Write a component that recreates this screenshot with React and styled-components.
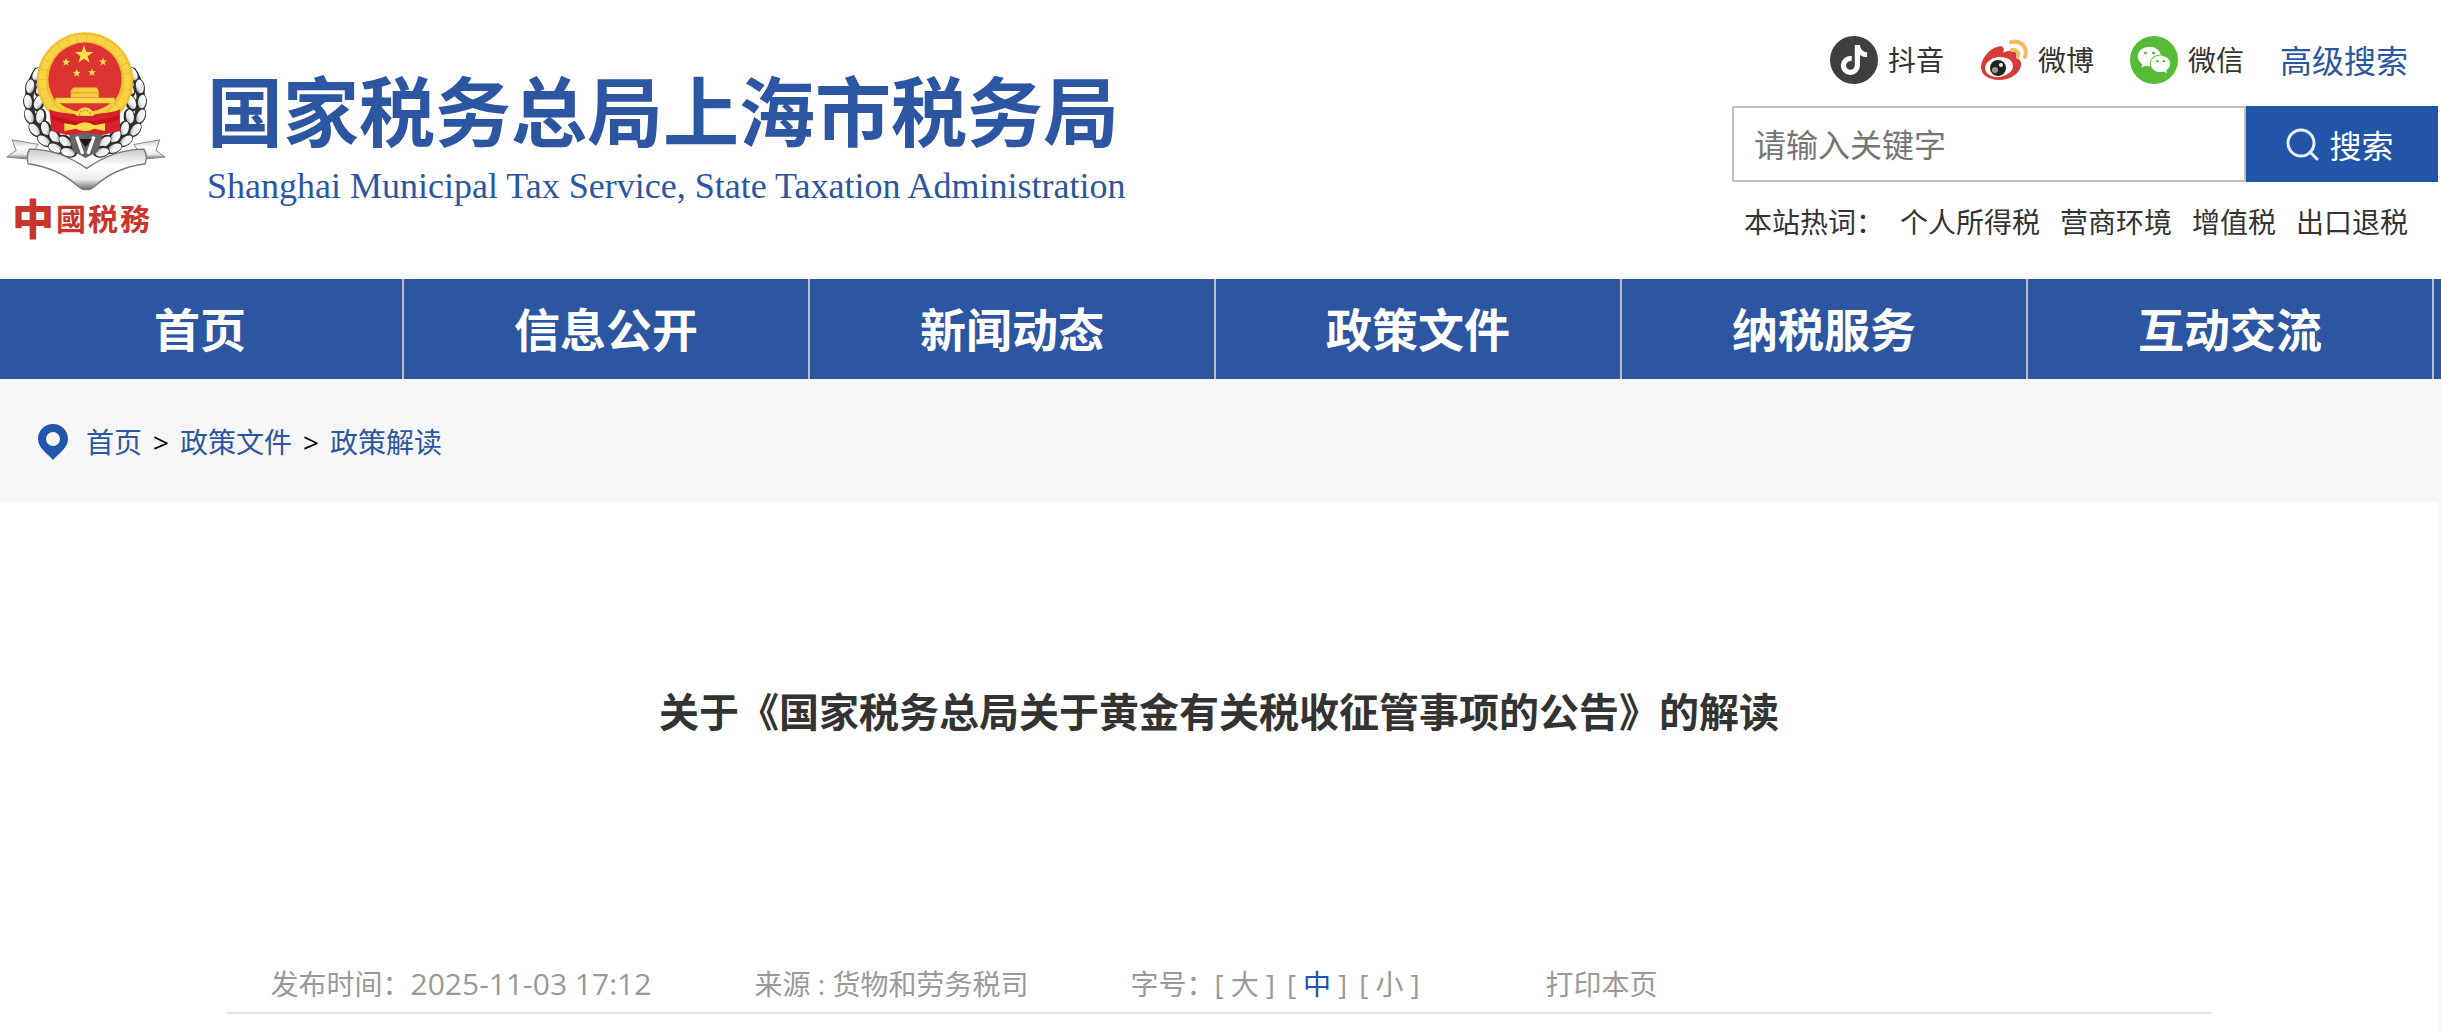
import { useState } from "react";
import styled, { createGlobalStyle } from "styled-components";
import { FaTiktok, FaWeixin } from "react-icons/fa";

const navItems = ["首页", "信息公开", "新闻动态", "政策文件", "纳税服务", "互动交流"];
const hotWords = ["个人所得税", "营商环境", "增值税", "出口退税"];
const fontSizes = ["大", "中", "小"];

// leaf positions on the left branch, the right one is mirrored
const leaves = [
  [112, 165, 28],
  [92, 202, 8],
  [124, 208, 38],
  [86, 247, -8],
  [116, 250, 20],
  [90, 290, -24],
  [122, 292, 6],
  [106, 330, -40],
  [138, 328, -14],
  [134, 362, -56],
  [166, 352, -34],
  [168, 384, -66],
  [198, 366, -50],
  [206, 396, -76],
];

function star(cx, cy, r) {
  const points = [];
  for (let i = 0; i < 10; i++) {
    const a = (Math.PI / 5) * i - Math.PI / 2;
    const d = i % 2 ? r * 0.4 : r;
    points.push(`${cx + d * Math.cos(a)},${cy + d * Math.sin(a)}`);
  }
  return points.join(" ");
}

function Branch() {
  return (
    <>
      <path d="M116 150C66 220 70 340 214 402" fill="none" stroke="#333" strokeWidth="26" />
      {leaves.map(([x, y, turn]) => (
        <g key={`${x}-${y}`} transform={`translate(${x} ${y}) rotate(${turn})`}>
          <ellipse rx="17" ry="26" fill="#2e2e2e" />
          <ellipse cx="-2" cy="-2" rx="12" ry="21" fill="url(#silver)" />
        </g>
      ))}
    </>
  );
}

function Emblem() {
  return (
    <EmblemSvg viewBox="0 0 540 520" aria-hidden="true">
      <defs>
        <linearGradient id="silver" x1="0" y1="0" x2="1" y2="1">
          <stop offset="0" stopColor="#fff" />
          <stop offset="0.6" stopColor="#eee" />
          <stop offset="1" stopColor="#8a8a8a" />
        </linearGradient>
        <linearGradient id="band" x1="0" y1="0" x2="0" y2="1">
          <stop offset="0" stopColor="#c8c8c8" />
          <stop offset="0.4" stopColor="#fff" />
          <stop offset="0.75" stopColor="#ececec" />
          <stop offset="1" stopColor="#666" />
        </linearGradient>
      </defs>
      <Branch />
      <g transform="translate(510 0) scale(-1 1)">
        <Branch />
      </g>
      <path d="M205 335h105l-16 60-37 20-38-20z" fill="#666" />
      <path d="M230 350l18 52M282 350l-18 52" stroke="#fff" strokeWidth="10" />
      <path d="M238 358h38l-19 24z" fill="#181818" />
      <path d="M36 360l78 14-30 44-64-6 28-20z" fill="url(#band)" stroke="#888" strokeWidth="3" />
      <path d="M480 360l-78 14 30 44 64-6-28-20z" fill="url(#band)" stroke="#888" strokeWidth="3" />
      <path
        d="M88 388c60 0 118 20 172 58 54-38 112-58 172-58 8 12 8 30 4 44-60 8-108 28-150 66-18 16-36 16-54 0-42-38-90-58-148-66-4-18-2-34 4-44z"
        fill="url(#band)"
        stroke="#777"
        strokeWidth="4"
      />
      <circle cx="255" cy="182" r="145" fill="#f2bf2f" />
      <circle cx="255" cy="182" r="128" fill="none" stroke="#f8d548" strokeWidth="20" strokeDasharray="26 3" />
      <path d="M148 268c40 20 174 20 212 0v66l-52 12-54-8-54 8-46-12z" fill="#d6222a" />
      <circle cx="255" cy="178" r="110" fill="#dc3430" />
      <polygon points={star(252, 105, 29)} fill="#fae04b" />
      <polygon points={star(198, 127, 13)} fill="#fae04b" />
      <polygon points={star(309, 126, 13)} fill="#fae04b" />
      <polygon points={star(230, 160, 13)} fill="#fae04b" />
      <polygon points={star(276, 158, 13)} fill="#fae04b" />
      <path d="M220 203h70l6 10v20h-84v-20z" fill="#f7cc3e" />
      <path d="M214 219h80" stroke="#e69a28" strokeWidth="3" />
      <path d="M166 234h178v16H166z" fill="#fada4a" />
      <path d="M170 252q85 62 170 0" fill="none" stroke="#f7cc3e" strokeWidth="11" />
      <path d="M228 288a27 25 0 0 1 54 0z" fill="#fada4a" />
      <path d="M238 286a17 15 0 0 1 34 0" fill="none" stroke="#dd7a28" strokeWidth="4" strokeDasharray="5 5" />
      <path d="M152 284q103 42 206 0l-2 14q-101 40-202 0z" fill="#c3141d" />
      <path d="M193 310l34 6q28-18 56 0l32-6v24l-32-7q-28 14-56 0l-34 7z" fill="#fada4a" />
    </EmblemSvg>
  );
}

function WeiboIcon() {
  return (
    <svg width="48" height="48" viewBox="0 0 48 48" aria-hidden="true">
      <path
        d="M1 31c0-8 8-18 16-20 6-2 8 1 6 6 5-3 11-3 13 0 1 2 0 4 0 5 4 1 6 4 5 8-2 8-11 14-22 14C9 44 1 39 1 31z"
        fill="#d93a3a"
      />
      <ellipse cx="19" cy="31" rx="14" ry="10" fill="#fff" transform="rotate(-8 19 31)" />
      <circle cx="18" cy="32" r="8" fill="#222" />
      <circle cx="15" cy="34" r="3" fill="#999" />
      <circle cx="21" cy="29" r="2" fill="#fff" />
      <path d="M31 6c10-2 17 5 14 15M32 14c4-1 7 2 6 6" fill="none" stroke="#f5bd62" strokeWidth="4" strokeLinecap="round" />
    </svg>
  );
}

function App() {
  const [size, setSize] = useState("中");

  return (
    <>
      <GlobalStyle />
      <Page>
        <Header>
          <Brand>
            <EmblemColumn>
              <Emblem />
              <EmblemText>
                <b>中</b>
                <span>國</span>
                <span>税</span>
                <span>務</span>
              </EmblemText>
            </EmblemColumn>
            <div>
              <BrandTitle>国家税务总局上海市税务局</BrandTitle>
              <BrandSub>Shanghai Municipal Tax Service, State Taxation Administration</BrandSub>
            </div>
          </Brand>

          <Tools>
            <Socials>
              <SocialLink href="#">
                <IconCircle $bg="#3f3f3f">
                  <FaTiktok size={30} />
                </IconCircle>
                抖音
              </SocialLink>
              <SocialLink href="#">
                <WeiboIcon />
                微博
              </SocialLink>
              <SocialLink href="#">
                <IconCircle $bg="#57bb38">
                  <FaWeixin size={34} />
                </IconCircle>
                微信
              </SocialLink>
              <AdvancedLink href="#">高级搜索</AdvancedLink>
            </Socials>
            <SearchForm onSubmit={(e) => e.preventDefault()}>
              <SearchInput type="text" placeholder="请输入关键字" aria-label="请输入关键字" />
              <SearchButton type="submit">
                <svg width="33" height="33" viewBox="0 0 33 33" fill="none" stroke="#e9eef6" strokeWidth="3" strokeLinecap="round" aria-hidden="true">
                  <circle cx="15" cy="15" r="13" />
                  <path d="M24 24l7 7" />
                </svg>
                搜索
              </SearchButton>
            </SearchForm>
            <HotWords>
              <HotLabel>本站热词：</HotLabel>
              {hotWords.map((word) => (
                <a href="#" key={word}>
                  {word}
                </a>
              ))}
            </HotWords>
          </Tools>
        </Header>

        <Nav>
          <NavList>
            {navItems.map((item) => (
              <NavLink href="#" key={item}>
                {item}
              </NavLink>
            ))}
          </NavList>
        </Nav>

        <Breadcrumb>
          <svg width="30" height="36" viewBox="0 0 30 36" aria-hidden="true">
            <path d="M15 0C6 0 0 7 0 15c0 9 9 14 15 21 6-7 15-12 15-21C30 7 24 0 15 0z" fill="#2156a8" />
            <circle cx="15" cy="15" r="7" fill="#f7f7f7" />
          </svg>
          <Crumbs>
            <a href="#">首页</a>
            <span>&gt;</span>
            <a href="#">政策文件</a>
            <span>&gt;</span>
            <a href="#">政策解读</a>
          </Crumbs>
        </Breadcrumb>

        <Article>
          <ArticleTitle>关于《国家税务总局关于黄金有关税收征管事项的公告》的解读</ArticleTitle>
          <Meta>
            <MetaItem>
              发布时间：<Time>2025-11-03 17:12</Time>
            </MetaItem>
            <MetaItem>来源 : 货物和劳务税司</MetaItem>
            <MetaItem>
              字号：
              <SizeList>
                {fontSizes.map((name) => (
                  <span key={name}>
                    [
                    <SizeButton type="button" $active={name === size} onClick={() => setSize(name)}>
                      {name}
                    </SizeButton>
                    ]
                  </span>
                ))}
              </SizeList>
            </MetaItem>
            <PrintButton type="button" onClick={() => window.print()}>
              打印本页
            </PrintButton>
          </Meta>
        </Article>
      </Page>
    </>
  );
}

const GlobalStyle = createGlobalStyle`
  * {
    box-sizing: border-box;
  }
  body {
    margin: 0;
    background: #f7f7f7;
    color: #333;
    font-family: "Open Sans", "Noto Sans CJK SC", sans-serif;
    font-size: 28px;
    line-height: 40px;
  }
  a {
    color: inherit;
    text-decoration: none;
  }
  button,
  input {
    font-family: inherit;
  }
`;

const Page = styled.div`
  display: flex;
  flex-direction: column;
  min-height: 100vh;
`;

const Header = styled.header`
  display: flex;
  justify-content: space-between;
  height: 279px;
  padding-right: 3px;
  background: #fff;
`;

const Brand = styled.div`
  display: flex;
  gap: 27px;
  padding-top: 20px;
  white-space: nowrap;
`;

const EmblemColumn = styled.div`
  width: 180px;
`;

const EmblemSvg = styled.svg`
  display: block;
  width: 180px;
  height: 173px;
`;

const EmblemText = styled.div`
  display: flex;
  align-items: center;
  gap: 2px;
  padding-left: 12px;
  color: #c8352c;
  font-size: 30px;
  font-weight: 700;
  line-height: 52px;

  b {
    font-size: 42px;
  }
`;

const BrandTitle = styled.h1`
  margin: 42px 0 0;
  color: #2c56a2;
  font-size: 76px;
  font-weight: 700;
  line-height: 100px;
`;

const BrandSub = styled.p`
  margin: 2px 0 0;
  color: #2c56a2;
  font-family: "Liberation Serif", serif;
  font-size: 36px;
  line-height: 44px;
`;

const Tools = styled.div`
  display: flex;
  flex-direction: column;
  gap: 22px;
  width: 706px;
  padding-top: 36px;
`;

const Socials = styled.div`
  display: flex;
  justify-content: flex-end;
  align-items: center;
  gap: 36px;
  padding-right: 30px;
`;

const SocialLink = styled.a`
  display: flex;
  align-items: center;
  gap: 10px;
  line-height: 48px;
`;

const IconCircle = styled.span`
  display: flex;
  justify-content: center;
  align-items: center;
  width: 48px;
  height: 48px;
  border-radius: 50%;
  background: ${(props) => props.$bg};
  color: #fff;
`;

const AdvancedLink = styled.a`
  padding-top: 2px;
  color: #2c56a2;
  font-size: 32px;
`;

const SearchForm = styled.form`
  display: flex;
  height: 76px;
`;

const SearchInput = styled.input`
  flex: 1;
  min-width: 0;
  padding: 0 20px;
  border: 2px solid #bfbfbf;
  background: #fff;
  font-size: 32px;
  outline: none;

  &::placeholder {
    color: #757575;
  }
`;

const SearchButton = styled.button`
  display: flex;
  justify-content: center;
  align-items: center;
  gap: 10px;
  width: 192px;
  padding: 0 4px 0 0;
  border: 0;
  background: #2255a8;
  color: #fff;
  font-size: 32px;
  cursor: pointer;
`;

const HotWords = styled.div`
  display: flex;
  justify-content: flex-end;
  gap: 20px;
  padding-right: 30px;
  line-height: 36px;
  white-space: nowrap;
`;

const HotLabel = styled.span`
  margin-right: auto;
  padding-left: 12px;
  /* the full-width colon already carries its own space */
  & + a {
    margin-left: -20px;
  }
`;

const Nav = styled.nav`
  overflow: hidden;
  background: #2c56a2;
`;

const NavList = styled.div`
  display: grid;
  grid-template-columns: repeat(6, 1fr);
  margin: 0 7px 0 -2px;
`;

const NavLink = styled.a`
  height: 100px;
  border-right: 2px solid #bfbfbf;
  color: #fff;
  font-size: 46px;
  font-weight: 700;
  line-height: 100px;
  text-align: center;
`;

const Breadcrumb = styled.div`
  display: flex;
  align-items: center;
  gap: 18px;
  height: 123px;
  padding: 2px 0 0 38px;
`;

const Crumbs = styled.div`
  display: flex;
  gap: 11px;
  color: #2c56a2;

  span {
    color: #000;
  }
`;

const Article = styled.main`
  flex: 1;
  margin-right: 3px;
  padding-top: 180px;
  background: #fff;
`;

const ArticleTitle = styled.h2`
  margin: 0 0 222px;
  font-size: 40px;
  font-weight: 700;
  line-height: 60px;
  text-align: center;
`;

const Meta = styled.div`
  display: grid;
  grid-template-columns: 484fr 376fr 415fr 666fr;
  max-width: 1985px;
  margin: 0 auto;
  padding: 0 0 8px 44px;
  border-bottom: 2px solid #e4e4e4;
  color: #999;
`;

const MetaItem = styled.div`
  display: flex;
  white-space: pre;
`;

const Time = styled.time`
  font-size: 30px;
`;

const SizeList = styled.div`
  display: flex;
  gap: 12px;
`;

const SizeButton = styled.button`
  padding: 0 7px;
  border: 0;
  background: none;
  color: ${(props) => (props.$active ? "#2255a8" : "inherit")};
  font-size: 28px;
  line-height: 40px;
  cursor: pointer;
`;

const PrintButton = styled.button`
  justify-self: start;
  padding: 0;
  border: 0;
  background: none;
  color: inherit;
  font-size: 28px;
  line-height: 40px;
  cursor: pointer;
`;

export default App;
